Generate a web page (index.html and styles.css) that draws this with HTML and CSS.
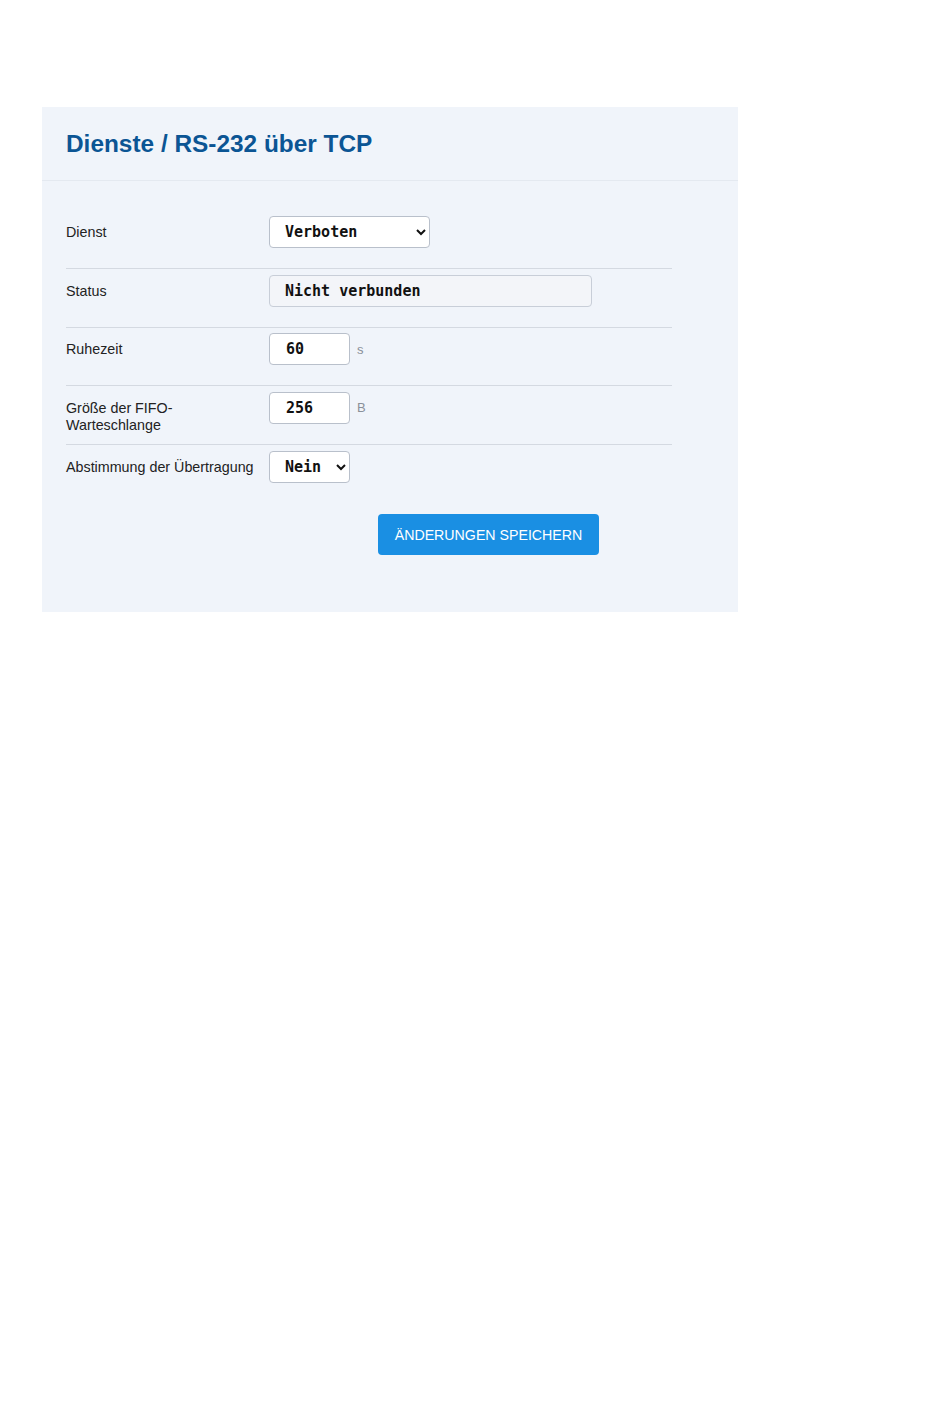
FILE: index.html
```html
<!DOCTYPE html>
<html>
	<head>
		<meta charset="utf-8">
		<title>RS-232 über TCP</title>
		<link rel="stylesheet" href="styles.css">
	</head>
	<body>
		<!-- Dienst-Panel -->
		<div class="panel">
			<div class="panel-head">
				<h1 class="panel-title">Dienste / RS-232 über TCP</h1>
			</div>
			<form class="panel-body">
				<div class="row">
					<label class="row-label">Dienst</label>
					<div class="row-field">
						<select class="ctrl sel-wide">
							<option>Verboten</option>
							<option>Erlaubt</option>
						</select>
					</div>
				</div>
				<div class="row">
					<label class="row-label">Status</label>
					<div class="row-field">
						<div class="ctrl readonly">Nicht verbunden</div>
					</div>
				</div>
				<div class="row">
					<label class="row-label">Ruhezeit</label>
					<div class="row-field">
						<input class="ctrl num" type="text" value="60">
						<span class="unit">s</span>
					</div>
				</div>
				<div class="row">
					<label class="row-label">Größe der FIFO-Warteschlange</label>
					<div class="row-field">
						<input class="ctrl num" type="text" value="256">
						<span class="unit">B</span>
					</div>
				</div>
				<div class="row last">
					<label class="row-label">Abstimmung der Übertragung</label>
					<div class="row-field">
						<select class="ctrl sel-small">
							<option>Nein</option>
							<option>Ja</option>
						</select>
					</div>
				</div>
				<div class="actions">
					<button class="btn" type="button">Änderungen speichern</button>
				</div>
			</form>
		</div>
	</body>
</html>
```

FILE: styles.css
```css
* {
	padding: 0;
	margin: 0;
	box-sizing: border-box;
}
body {
	background-color: #ffffff;
	font-family: "Liberation Sans", Arial, sans-serif;
	color: #222222;
}
.panel {
	width: 696px;
	height: 505px;
	margin: 107px 0 0 42px;
	background-color: #f0f4fa;
}
.panel-head {
	height: 74px;
	padding: 0 24px;
	display: flex;
	align-items: center;
	border-bottom: 1px solid #e4e9f0;
}
.panel-title {
	font-size: 24.4px;
	font-weight: bold;
	color: #0b5594;
}
.panel-body {
	width: 654px;
	padding: 29.5px 24px 0;
}
.row {
	display: grid;
	grid-template-columns: 203px 1fr;
	align-items: start;
	padding: 5.5px 0 20.17px;
	border-bottom: 1px solid #d4d9e1;
}
.row.last {
	border-bottom: none;
	padding-bottom: 0;
}
.row-label {
	font-size: 14.3px;
	line-height: 17px;
	padding: 8px 12px 0 0;
	/* zweizeilige Labels ragen in den Abstand */
	margin-bottom: -12px;
}
.row-field {
	display: flex;
	align-items: center;
	gap: 7px;
}
.ctrl {
	height: 32px;
	border: 1px solid #b9c0cb;
	border-radius: 4px;
	background-color: #ffffff;
	font-family: "DejaVu Sans Mono", monospace;
	font-size: 15px;
	font-weight: bold;
	color: #111111;
	padding: 0 8px 0 16px;
}
select.ctrl {
	padding-left: 11px;
}
.sel-wide {
	width: 161px;
}
.sel-small {
	width: 81px;
}
.num {
	width: 81px;
}
.readonly {
	width: 323px;
	display: flex;
	align-items: center;
	padding-left: 15px;
	background-color: #f3f5f9;
	border-color: #c8ced8;
}
.unit {
	font-size: 13px;
	color: #8a9099;
}
.actions {
	padding: 31.5px 0 0 312px;
}
.btn {
	width: 221px;
	height: 41px;
	border: none;
	border-radius: 4px;
	background-color: #1a8fe3;
	color: #ffffff;
	font-family: "Liberation Sans", Arial, sans-serif;
	font-size: 14.2px;
	text-transform: uppercase;
}
```
